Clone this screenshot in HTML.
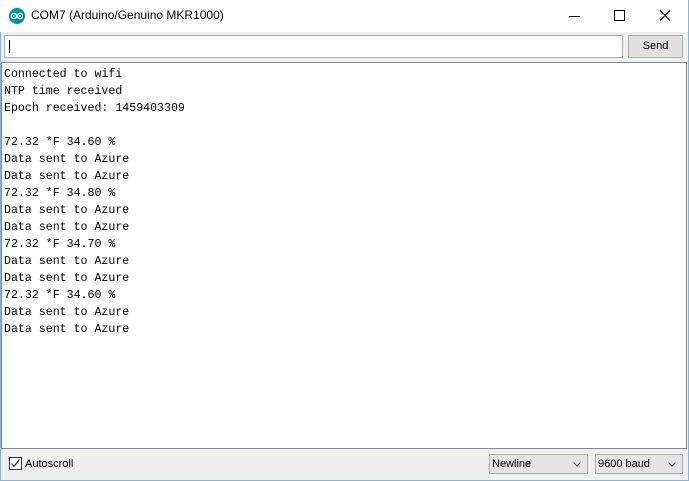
<!DOCTYPE html>
<html><head><meta charset="utf-8"><style>
*{margin:0;padding:0;box-sizing:border-box}
body{width:689px;height:481px;background:#f0f0f0;position:relative;overflow:hidden;font-family:"Segoe UI","Liberation Sans",sans-serif}
.win{position:absolute;left:0;top:0;width:689px;height:481px;border-right:1px solid #88b4dc;border-bottom:1px solid #88b4dc;border-left:1px solid #88b4dc}
.title{position:absolute;left:0;top:0;width:688px;height:32px;background:#fff}
.title .t{position:absolute;left:31px;top:8px;font-size:12px;color:#000}
.inp{position:absolute;left:4px;top:35px;width:619px;height:23px;background:#fff;border:1px solid #adadad}
.inp i{position:absolute;left:4px;top:4px;width:1px;height:13px;background:#000}
.send{position:absolute;left:628px;top:35px;width:55px;height:23px;background:#e1e1e1;border:1px solid #adadad;font-size:11px;text-align:center;line-height:21px}
.ta{position:absolute;left:1px;top:62px;width:686px;height:387px;background:#fff;border:1px solid #828790}
.ta pre{position:absolute;left:2px;top:3px;font-family:"Liberation Mono",monospace;font-size:11.6px;line-height:17px;color:#000}
.cb{position:absolute;left:9px;top:457px;width:13px;height:13px;border:1px solid #333;background:#fff}
.lbl{position:absolute;left:25px;top:457px;font-size:11px;line-height:14px}
.sel{position:absolute;top:454px;height:20px;background:#e5e5e5;border:1px solid #acacac;font-size:11px;line-height:18px;padding-left:2px}
</style></head><body>
<div class="win"></div>
<div class="title">
<svg style="position:absolute;left:9px;top:8px" width="16" height="16" viewBox="0 0 16 16"><circle cx="8" cy="8" r="8" fill="#00979c"/><circle cx="5" cy="8" r="2.6" fill="none" stroke="#fff" stroke-width="1.3"/><circle cx="11" cy="8" r="2.6" fill="none" stroke="#fff" stroke-width="1.3"/><path d="M4 8h2M10 8h2M11 7v2" stroke="#fff" stroke-width="0.9"/></svg>
<div class="t">COM7 (Arduino/Genuino MKR1000)</div>
<svg style="position:absolute;left:560px;top:8px" width="120" height="16" viewBox="0 0 120 16">
<path d="M9 8.5h11" stroke="#000" stroke-width="1"/>
<rect x="54.5" y="2.5" width="10" height="10" fill="none" stroke="#000"/>
<path d="M100 2.5l10 10M110 2.5l-10 10" stroke="#000" stroke-width="1"/>
</svg>
</div>
<div class="inp"><i></i></div>
<div class="send">Send</div>
<div class="ta"><pre>Connected to wifi
NTP time received
Epoch received: 1459403309

72.32 *F 34.60 %
Data sent to Azure
Data sent to Azure
72.32 *F 34.80 %
Data sent to Azure
Data sent to Azure
72.32 *F 34.70 %
Data sent to Azure
Data sent to Azure
72.32 *F 34.60 %
Data sent to Azure
Data sent to Azure</pre></div>
<div class="cb"><svg width="11" height="11" viewBox="0 0 11 11" style="position:absolute;left:0;top:0"><path d="M1.5 5.5l2.5 3 5.5-7" fill="none" stroke="#222" stroke-width="1.1"/></svg></div>
<div class="lbl">Autoscroll</div>
<div class="sel" style="left:489px;width:99px">Newline<svg style="position:absolute;right:6px;top:7px" width="8" height="5"><path d="M0.5 0.5l3.5 3.5 3.5-3.5" fill="none" stroke="#555"/></svg></div>
<div class="sel" style="left:595px;width:88px">9600 baud<svg style="position:absolute;right:6px;top:7px" width="8" height="5"><path d="M0.5 0.5l3.5 3.5 3.5-3.5" fill="none" stroke="#555"/></svg></div>
</body></html>
